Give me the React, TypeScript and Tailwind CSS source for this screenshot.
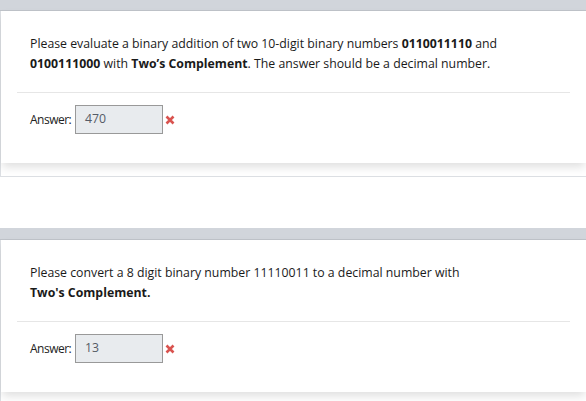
import React from "react";

function XMark() {
  return (
    <svg width="10" height="10" viewBox="0 0 10 10" className="ml-[2px] shrink-0">
      <path d="M1.5 1.5 L8.5 8.5 M8.5 1.5 L1.5 8.5" stroke="#d9534f" strokeWidth="2.6" strokeLinecap="butt" />
    </svg>
  );
}

function Question({ children, answer, first }: { children: React.ReactNode; answer: string; first?: boolean }) {
  return (
    <div className={first ? "-mt-px" : ""}>
      <div className="h-[12px] bg-[#d1d5db] border-b border-[#bfc3c9]" />
      <div className="border-l border-b border-[#dcdfe3] pb-[13px]">
        <div className="bg-white px-4 pt-[23px] pb-[29px] shadow-[0_5px_9px_-1px_rgba(0,0,0,0.13)]">
          <div className="px-[13px] text-[12.3px] leading-[20px] text-[#1a1a1a] whitespace-nowrap">{children}</div>
          <div className="mt-[18px] border-t border-[#e6e6e6]" />
          <div className="mt-[12px] px-[13px] flex items-center text-[12.3px] text-[#222]">
            <span className="w-[45px] text-[12px] tracking-[-0.5px]">Answer:</span>
            <div className="w-[88px] h-[29px] bg-[#e8ebee] border border-[#999] flex items-center pl-[9px] text-[#555b66]">
              {answer}
            </div>
            <XMark />
          </div>
        </div>
      </div>
    </div>
  );
}

export default function App() {
  return (
    <div className="w-[586px] h-[401px] overflow-hidden bg-white" style={{ fontFamily: '"Open Sans", "Noto Sans", sans-serif' }}>
      <Question first answer="470">
        Please evaluate a binary addition of two 10-digit binary numbers <b>0110011110</b> and
        <br />
        <b>0100111000</b> with <b>Two’s Complement</b>. The answer should be a decimal number.
      </Question>
      <div className="h-[51px]" />
      <Question answer="13">
        Please convert a 8 digit binary number 11110011 to a decimal number with
        <br />
        <b>Two's Complement.</b>
      </Question>
    </div>
  );
}
